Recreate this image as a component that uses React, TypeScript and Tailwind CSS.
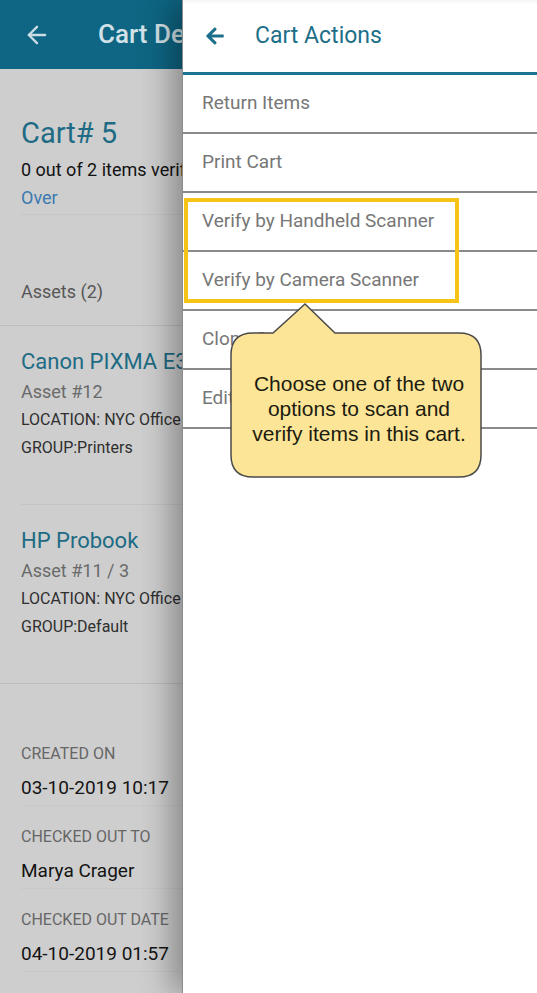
import React from "react";
import { ArrowLeft } from "lucide-react";
import { FaArrowLeft } from "react-icons/fa";

const roboto = { fontFamily: "Roboto, 'Noto Sans', sans-serif" };

function AssetItem({ name, num, loc, group, last }: { name: string; num: string; loc: string; group: string; last?: boolean }) {
  return (
    <div className="pl-[21px]">
      <div className={"pt-[23px] pb-[42px] " + (last ? "" : "border-b border-[#c4c4c4]")}>
        <div className="text-[22px] leading-[26px] text-[#1d6b84] whitespace-nowrap">{name}</div>
        <div className="mt-[3px] text-[18px] leading-[28px] text-[#6a6a6a] whitespace-nowrap">{num}</div>
        <div className="text-[16px] leading-[28px] text-[#2f2f2f] whitespace-nowrap">{loc}</div>
        <div className="text-[16px] leading-[28px] text-[#2f2f2f] whitespace-nowrap">{group}</div>
      </div>
    </div>
  );
}

function Detail({ label, value }: { label: string; value: string }) {
  return (
    <div className="pt-[19px] pb-[2px] border-b border-[#c8c8c8]">
      <div className="text-[16px] leading-[24px] text-[#666666] whitespace-nowrap">{label}</div>
      <div className="mt-[7px] text-[19px] leading-[30px] text-[#141414] whitespace-nowrap">{value}</div>
    </div>
  );
}

const menu = ["Return Items", "Print Cart", "Verify by Handheld Scanner", "Verify by Camera Scanner", "Clone Cart", "Edit Cart"];

export default function App() {
  return (
    <div className="relative w-[537px] h-[993px] overflow-hidden bg-[#cecece]" style={roboto}>
      {/* Background page (dimmed) */}
      <div className="flex flex-col">
        <div className="h-[69px] bg-[#0e6684] flex items-center">
          <ArrowLeft className="ml-[23px] text-[#cadde4]" size={28} strokeWidth={2} />
          <div className="ml-[47px] text-[26px] font-medium text-[#d2e2e8] whitespace-nowrap">Cart Details</div>
        </div>
        <div className="pl-[21px] pt-[47px]">
          <div className="text-[29px] leading-[34px] text-[#1d6b84]">Cart# 5</div>
          <div className="mt-[6px] text-[18px] leading-[28px] text-[#121212] whitespace-nowrap">0 out of 2 items verified</div>
          <div className="text-[18px] leading-[28px] text-[#3b79b0]">Over</div>
          <div className="mt-[2px] border-b border-[#c6c6c6]" />
          <div className="mt-[65px] text-[18px] leading-[24px] text-[#575757]">Assets (2)</div>
        </div>
        <div className="mt-[21px] border-b border-[#bdbdbd]" />
        <AssetItem name="Canon PIXMA E3370" num="Asset #12" loc="LOCATION: NYC Office" group="GROUP:Printers" />
        <AssetItem name="HP Probook" num="Asset #11 / 3" loc="LOCATION: NYC Office" group="GROUP:Default" last />
        <div className="border-b border-[#bdbdbd]" />
        <div className="pl-[21px] pt-[39px]">
          <Detail label="CREATED ON" value="03-10-2019 10:17" />
          <Detail label="CHECKED OUT TO" value="Marya Crager" />
          <Detail label="CHECKED OUT DATE" value="04-10-2019 01:57" />
          <Detail label="DUE DATE" value="05-10-2019 01:57" />
        </div>
      </div>

      {/* Drawer */}
      <div className="absolute top-0 bottom-0 left-[182px] right-0 bg-white border-l border-[#8c8c8c] shadow-[-10px_0_30px_rgba(0,0,0,0.35)]">
        <div className="h-[75px] flex items-center border-b-[3px] border-[#1b7490] bg-gradient-to-b from-[#f4f4f4] to-white to-[6%]">
          <FaArrowLeft className="ml-[22px] text-[#1a6f8a]" size={20} />
          <div className="ml-[30px] text-[23px] text-[#1d6f89] whitespace-nowrap">Cart Actions</div>
        </div>
        {menu.map((m) => (
          <div key={m} className="h-[59px] flex items-center border-b-2 border-[#8a8a8a] pl-[19px] text-[19px] text-[#777777] whitespace-nowrap">
            {m}
          </div>
        ))}
      </div>

      {/* Highlight box */}
      <div className="absolute left-[184px] top-[198px] w-[275px] h-[105px] border-4 border-[#f6c416]" />

      {/* Callout */}
      <div className="absolute left-[229px] top-[302px] w-[256px] h-[178px]">
        <svg width="256" height="178" viewBox="0 0 256 178" className="absolute inset-0">
          <path
            d="M 24 31 L 44 31 L 76 2 L 106 31 L 230 31 Q 252 31 252 53 L 252 153 Q 252 175 230 175 L 24 175 Q 2 175 2 153 L 2 53 Q 2 31 24 31 Z"
            fill="#fde597"
            stroke="#4a4a4a"
            strokeWidth="1.5"
          />
        </svg>
        <div
          className="absolute left-[2px] top-[69px] w-[256px] text-center text-[21px] leading-[25px] text-[#1c1c10]"
          style={{ fontFamily: "'Liberation Sans', Arial, sans-serif" }}
        >
          Choose one of the two
          <br />
          options to scan and
          <br />
          verify items in this cart.
        </div>
      </div>
    </div>
  );
}
